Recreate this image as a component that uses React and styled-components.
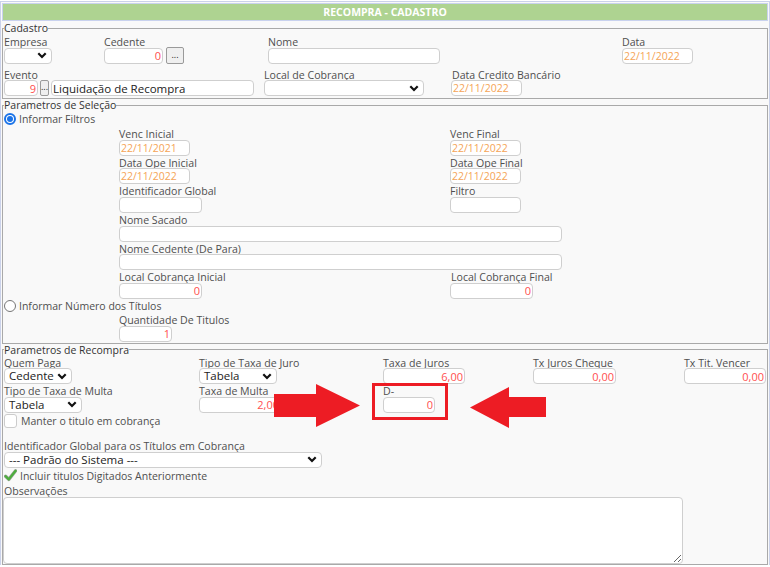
import React from "react";
import styled, { createGlobalStyle } from "styled-components";

const Global = createGlobalStyle`
  html, body { margin: 0; padding: 0; background: #ffffff; }
  body { font-family: "Open Sans", "Noto Sans", sans-serif; }
  * { box-sizing: border-box; }
`;

const Page = styled.div`
  width: 770px;
  margin-top: 1px;
  border: 1px solid #cbd2ea;
  border-bottom: none;
  padding: 1px 1px 0;
  background: #f9f9f9;
`;

const Header = styled.div`
  height: 18px;
  border: 1px solid #c9d2ee;
  background: #aed391;
  color: #ffffff;
  font-weight: 700;
  font-size: 10.5px;
  line-height: 16px;
  text-align: center;
`;

const Fieldset = styled.fieldset`
  margin: ${(p) => p.$mt || 0}px 0 0;
  padding: ${(p) => p.$pt || 0}px 1px ${(p) => p.$pb || 0}px;
  border: 1px solid #a9a9a9;
  background: #f9f9f9;
  min-width: 0;
`;

const Legend = styled.legend`
  padding: 0;
  margin-left: 0;
  font-size: 10.5px;
  line-height: 12px;
  color: #333;
`;

const Row = styled.div`
  position: relative;
  display: grid;
  grid-template-columns: ${(p) => p.$cols};
  margin-top: ${(p) => p.$mt || 0}px;
  align-items: start;
`;

const Field = styled.div`
  display: flex;
  flex-direction: column;
  grid-column: ${(p) => p.$span || "auto"};
`;

const Label = styled.span`
  display: block;
  height: 12.6px;
  margin-top: ${(p) => p.$mt || 0}px;
  font-size: 10.6px;
  line-height: 14.6px;
  color: #4f4f4f;
  white-space: nowrap;
  padding-left: ${(p) => p.$pl || 0}px;
`;

const InputLine = styled.div`
  display: flex;
  align-items: flex-start;
  gap: ${(p) => p.$gap || 3}px;
`;

const Input = styled.input`
  width: ${(p) => p.$w}px;
  height: 16px;
  margin: 0;
  padding: 0 1px 0 1px;
  border: 1px solid #cfcfcf;
  border-radius: 4px;
  background: #ffffff;
  font-family: "Open Sans", "Noto Sans", sans-serif;
  font-size: ${(p) => p.$fs || 10.5}px;
  line-height: 14px;
  text-align: ${(p) => p.$align || "left"};
  color: ${(p) => p.$color || "#222"};
  outline: none;
`;

const SelectBox = styled.div`
  width: ${(p) => p.$w}px;
  height: 16px;
  display: flex;
  align-items: center;
  justify-content: space-between;
  padding: 0 4px 0 4px;
  border: 1px solid #cfcfcf;
  border-radius: 4px;
  background: #ffffff;
  font-size: 11.5px;
  line-height: 14px;
  color: #222;
  white-space: nowrap;
`;

const DotsButton = styled.div`
  width: ${(p) => p.$w}px;
  height: ${(p) => p.$h}px;
  margin-top: ${(p) => p.$mt || 0}px;
  border: 1px solid #9a9a9a;
  border-radius: 2px;
  background: #efefef;
  font-size: 9px;
  line-height: ${(p) => p.$h - 4}px;
  text-align: center;
  color: #222;
  overflow: hidden;
`;

const OptionRow = styled.div`
  display: flex;
  align-items: center;
  gap: ${(p) => p.$gap || 3}px;
  height: ${(p) => p.$h}px;
  margin-top: ${(p) => p.$mt || 0}px;
  font-size: ${(p) => p.$fs || 10.5}px;
  color: #4f4f4f;
  white-space: nowrap;
`;

const Radio = styled.span`
  width: 12px;
  height: 12px;
  border-radius: 50%;
  flex: none;
  border: ${(p) => (p.$on ? "2px solid #1a73e8" : "1px solid #767676")};
  background: #ffffff;
  display: flex;
  align-items: center;
  justify-content: center;
  &::after {
    content: "";
    display: ${(p) => (p.$on ? "block" : "none")};
    width: 6px;
    height: 6px;
    border-radius: 50%;
    background: #1a73e8;
  }
`;

const CheckBox = styled.span`
  width: 13px;
  height: 14px;
  flex: none;
  border: 1px solid #cccccc;
  border-radius: 3px;
  background: #ffffff;
`;

const TextArea = styled.textarea`
  display: block;
  width: 680px;
  height: 67px;
  margin: 0 0 0 -1px;
  border: 1px solid #cfcfcf;
  border-radius: 4px;
  background: #ffffff;
  resize: both;
  font-family: "Open Sans", sans-serif;
`;

const Indented = styled.div`
  margin-left: 115px;
`;

const Overlay = styled.svg`
  position: absolute;
  left: ${(p) => p.$x}px;
  top: ${(p) => p.$y}px;
  overflow: visible;
  pointer-events: none;
`;

const Highlight = styled.div`
  position: absolute;
  left: 368px;
  top: -1.6px;
  width: 76px;
  height: 37px;
  border: 3px solid #ed1c24;
  pointer-events: none;
`;

const ORANGE = "#f5a456";
const RED = "#ff4f4f";

const Chevron = () => (
  <svg width="10" height="7" viewBox="0 0 10 7">
    <path d="M1.3 1.3 L5 5 L8.7 1.3" fill="none" stroke="#111" strokeWidth="2.2" />
  </svg>
);

const Select = ({ w, text }) => (
  <SelectBox $w={w}>
    <span>{text}</span>
    <Chevron />
  </SelectBox>
);

const GreenCheck = () => (
  <svg width="13" height="13" viewBox="0 0 13 13">
    <path d="M1.6 7.2 L4.8 10.4 L11.6 1.8" fill="none" stroke="#9aa39a" strokeWidth="3.4" strokeLinecap="round" strokeLinejoin="round" />
    <path d="M1.6 7.2 L4.8 10.4 L11.6 1.8" fill="none" stroke="#4cae3c" strokeWidth="2.2" strokeLinecap="round" strokeLinejoin="round" />
  </svg>
);

const DateField = ({ label, value }) => (
  <Field>
    <Label>{label}</Label>
    <Input $w={71} readOnly value={value} $color={ORANGE} />
  </Field>
);

export default function App() {
  return (
    <>
      <Global />
      <Page>
        <Header>RECOMPRA - CADASTRO</Header>

        <Fieldset $mt={1} $pt={1} $pb={2}>
          <Legend>Cadastro</Legend>
          <Row $cols="100px 164px 354px auto">
            <Field>
              <Label>Empresa</Label>
              <Select w={48} text="" />
            </Field>
            <Field>
              <Label>Cedente</Label>
              <InputLine $gap={3}>
                <Input $w={59} readOnly value="0" $align="right" $color={RED} $fs={11} />
                <DotsButton $w={18} $h={17} $mt={-1}>...</DotsButton>
              </InputLine>
            </Field>
            <Field>
              <Label>Nome</Label>
              <Input $w={172} readOnly value="" />
            </Field>
            <DateField label="Data" value="22/11/2022" />
          </Row>
          <Row $cols="260px 187px auto" $mt={4}>
            <Field>
              <Label>Evento</Label>
              <InputLine $gap={2}>
                <Input $w={34} readOnly value="9" $align="right" $color={RED} $fs={11} />
                <DotsButton $w={9} $h={16}>...</DotsButton>
                <Input $w={203} readOnly value="Liquidação de Recompra" $fs={11.5} />
              </InputLine>
            </Field>
            <Field>
              <Label>Local de Cobrança</Label>
              <Select w={160} text="" />
            </Field>
            <Field>
              <Label $pl={1}>Data Credito Bancário</Label>
              <Input $w={71} readOnly value="22/11/2022" $color={ORANGE} />
            </Field>
          </Row>
        </Fieldset>

        <Fieldset $pb={1}>
          <Legend>Parametros de Seleção</Legend>
          <OptionRow $h={16}>
            <Radio $on />
            <span>Informar Filtros</span>
          </OptionRow>
          <Indented>
            <Row $cols="331px auto">
              <DateField label="Venc Inicial" value="22/11/2021" />
              <DateField label="Venc Final" value="22/11/2022" />
              <DateField label="Data Ope Inicial" value="22/11/2022" />
              <DateField label="Data Ope Final" value="22/11/2022" />
              <Field>
                <Label>Identificador Global</Label>
                <Input $w={83} readOnly value="" />
              </Field>
              <Field>
                <Label>Filtro</Label>
                <Input $w={71} readOnly value="" />
              </Field>
              <Field $span="1 / 3">
                <Label>Nome Sacado</Label>
                <Input $w={443} readOnly value="" />
              </Field>
              <Field $span="1 / 3">
                <Label>Nome Cedente (De Para)</Label>
                <Input $w={443} readOnly value="" />
              </Field>
              <Field>
                <Label>Local Cobrança Inicial</Label>
                <Input $w={83} readOnly value="0" $align="right" $color={RED} $fs={11} />
              </Field>
              <Field>
                <Label $pl={1}>Local Cobrança Final</Label>
                <Input $w={83} readOnly value="0" $align="right" $color={RED} $fs={11} />
              </Field>
            </Row>
          </Indented>
          <OptionRow $h={14.4}>
            <Radio />
            <span>Informar Número dos Títulos</span>
          </OptionRow>
          <Indented>
            <Field>
              <Label>Quantidade De Titulos</Label>
              <Input $w={53} readOnly value="1" $align="right" $color={RED} $fs={11} />
            </Field>
          </Indented>
        </Fieldset>

        <Fieldset>
          <Legend>Parametros de Recompra</Legend>
          <Row $cols="195px 184px 150px 151px auto">
            <Field>
              <Label>Quem Paga</Label>
              <Select w={68} text="Cedente" />
            </Field>
            <Field>
              <Label>Tipo de Taxa de Juro</Label>
              <Select w={78} text="Tabela" />
            </Field>
            <Field>
              <Label>Taxa de Juros</Label>
              <Input $w={82} readOnly value="6,00" $align="right" $color={RED} $fs={11} />
            </Field>
            <Field>
              <Label>Tx Juros Cheque</Label>
              <Input $w={83} readOnly value="0,00" $align="right" $color={RED} $fs={11} />
            </Field>
            <Field>
              <Label>Tx Tit. Vencer</Label>
              <Input $w={82} readOnly value="0,00" $align="right" $color={RED} $fs={11} />
            </Field>
          </Row>
          <Row $cols="195px 184px auto">
            <Field>
              <Label>Tipo de Taxa de Multa</Label>
              <Select w={78} text="Tabela" />
            </Field>
            <Field>
              <Label>Taxa de Multa</Label>
              <Input $w={82} readOnly value="2,00" $align="right" $color={RED} $fs={11} />
            </Field>
            <Field>
              <Label>D-</Label>
              <Input $w={52} readOnly value="0" $align="right" $color={RED} $fs={11} />
            </Field>
            <Highlight />
            <Overlay $x={270} $y={-0.6} width="86" height="43" viewBox="0 0 86 43">
              <polygon points="0,10 42,10 42,0 86,21.5 42,43 42,33 0,33" fill="#ed1c24" />
            </Overlay>
            <Overlay $x={466} $y={2.4} width="76" height="41" viewBox="0 0 76 41">
              <polygon points="0,20.5 39,0 39,10 76,10 76,30 39,30 39,41" fill="#ed1c24" />
            </Overlay>
          </Row>
          <OptionRow $h={16.8} $gap={4} $fs={10.5}>
            <CheckBox />
            <span>Manter o titulo em cobrança</span>
          </OptionRow>
          <Field>
            <Label $mt={9.6}>Identificador Global para os Títulos em Cobrança</Label>
            <Select w={318} text="--- Padrão do Sistema ---" />
          </Field>
          <OptionRow $h={16} $gap={3}>
            <GreenCheck />
            <span>Incluir titulos Digitados Anteriormente</span>
          </OptionRow>
          <Field>
            <Label>Observações</Label>
            <TextArea readOnly />
          </Field>
        </Fieldset>
      </Page>
    </>
  );
}
